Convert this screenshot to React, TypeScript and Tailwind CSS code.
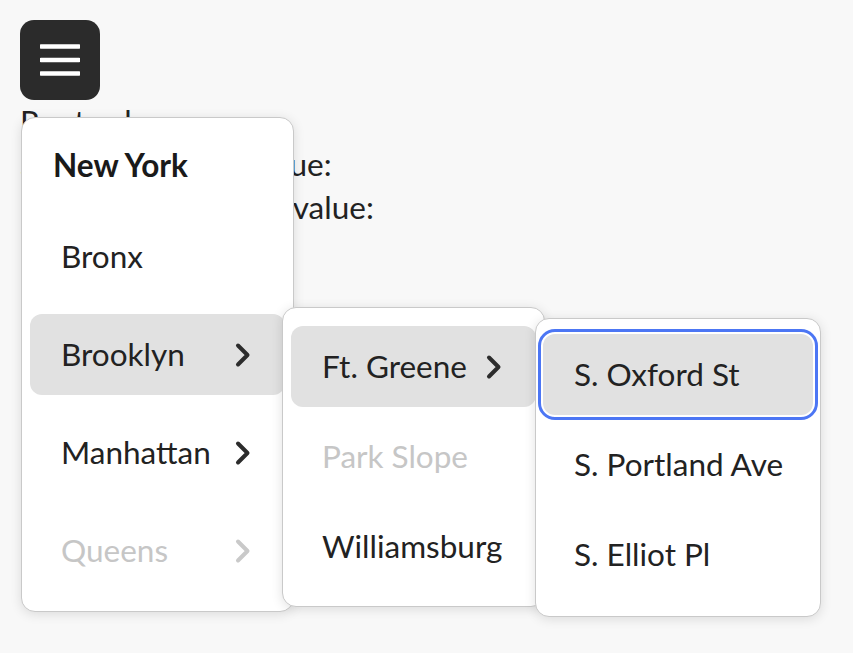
import type { ReactNode } from "react";

type Item = {
  label: string;
  sub?: boolean;
  disabled?: boolean;
  active?: boolean;
  focused?: boolean;
};

const boroughs: Item[] = [
  { label: "Bronx" },
  { label: "Brooklyn", sub: true, active: true },
  { label: "Manhattan", sub: true },
  { label: "Queens", sub: true, disabled: true },
];

const neighborhoods: Item[] = [
  { label: "Ft. Greene", sub: true, active: true },
  { label: "Park Slope", disabled: true },
  { label: "Williamsburg" },
];

const streets: Item[] = [
  { label: "S. Oxford St", active: true, focused: true },
  { label: "S. Portland Ave" },
  { label: "S. Elliot Pl" },
];

function Chevron({ disabled }: { disabled?: boolean }) {
  return (
    <svg width="18" height="28" viewBox="0 0 18 28" className="shrink-0">
      <path
        d="M4 4.5 L13.5 14 L4 23.5"
        fill="none"
        stroke={disabled ? "#c9c9c9" : "#2c2c2c"}
        strokeWidth="4"
        strokeLinecap="round"
        strokeLinejoin="round"
      />
    </svg>
  );
}

function Row({ item }: { item: Item }) {
  return (
    <div
      className={
        "h-[81px] flex items-center justify-between pl-[31px] pr-[33px] rounded-[12px] " +
        (item.active ? "bg-[#e1e1e1] " : "") +
        (item.focused
          ? "outline-[3px] outline-solid outline-[#4c76f4] outline-offset-[2px] "
          : "") +
        (item.disabled ? "text-[#c6c6c6]" : "text-[#222222]")
      }
    >
      <span className="whitespace-nowrap">{item.label}</span>
      {item.sub && <Chevron disabled={item.disabled} />}
    </div>
  );
}

function Popover({ className, children }: { className: string; children: ReactNode }) {
  return (
    <div
      className={
        "absolute bg-white border-[1.5px] border-[#c9c9c9] rounded-[14px] shadow-[0_2px_12px_rgba(0,0,0,0.12)] " +
        className
      }
    >
      {children}
    </div>
  );
}

export default function App() {
  return (
    <div className="relative min-h-[653px] bg-[#f8f8f8] p-5 font-['Lato',sans-serif] text-[31.5px] text-[#222222]">
      <button className="w-20 h-20 rounded-[14px] bg-[#2b2b2b] flex items-center justify-center">
        <svg width="40" height="40" viewBox="0 0 40 40">
          <path
            d="M1 6.5 H39 M1 20 H39 M1 33.5 H39"
            stroke="#ffffff"
            strokeWidth="4.5"
            strokeLinecap="round"
          />
        </svg>
      </button>
      <div className="leading-[43px]">
        <div>Root value:</div>
        <div>Submenu action value:</div>
        <div>Nested sub-menu's value:</div>
      </div>

      <Popover className="left-[21px] top-[117px] w-[273px] h-[495px] px-[8px]">
        <div className="h-[98px] flex items-center pl-[23px] pb-[3px] font-bold text-[#1a1a1a]">
          New York
        </div>
        <div className="flex flex-col gap-[17px]">
          {boroughs.map((item) => (
            <Row key={item.label} item={item} />
          ))}
        </div>
      </Popover>

      <Popover className="left-[282px] top-[307px] w-[263px] h-[300px] px-[8px] pt-[18px]">
        <div className="flex flex-col gap-[9px]">
          {neighborhoods.map((item) => (
            <Row key={item.label} item={item} />
          ))}
        </div>
      </Popover>

      <Popover className="left-[535px] top-[318px] w-[286px] h-[299px] px-[7px] pt-[15px]">
        <div className="flex flex-col gap-[9px]">
          {streets.map((item) => (
            <Row key={item.label} item={item} />
          ))}
        </div>
      </Popover>
    </div>
  );
}
